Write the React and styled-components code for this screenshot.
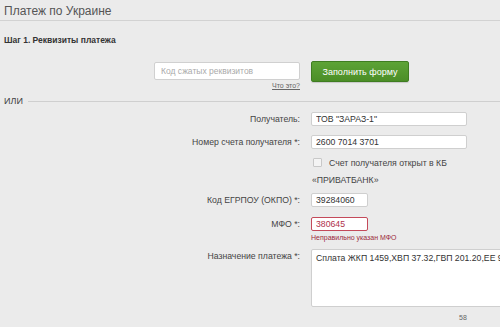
import React from "react";
import styled, { createGlobalStyle } from "styled-components";

const GlobalStyle = createGlobalStyle`
	html, body {
		margin: 0;
		padding: 0;
		background: #ebebeb;
		overflow: hidden;
	}
	body {
		font-family: "Liberation Sans", Arial, sans-serif;
		color: #444;
	}
`;

const Page = styled.div`
	width: 500px;
	height: 327px;
	box-sizing: border-box;
	background: #ebebeb;
	overflow: hidden;
`;

const Title = styled.h1`
	margin: 0;
	padding: 4px 0 0 4px;
	height: 16px;
	font-size: 12px;
	font-weight: normal;
	color: #555;
	line-height: 14px;
	border-bottom: 1px solid #d2d2d2;
`;

const StepTitle = styled.h2`
	margin: 0;
	padding: 14px 0 0 4px;
	font-size: 8.5px;
	font-weight: bold;
	color: #333;
	line-height: 10px;
`;

const QuickRow = styled.div`
	display: flex;
	align-items: flex-start;
	margin: 17px 0 0 154px;
	gap: 11px;
`;

const QuickField = styled.div`
	display: flex;
	flex-direction: column;
	align-items: flex-end;
`;

const QuickInput = styled.input`
	box-sizing: border-box;
	width: 146px;
	height: 18px;
	border: 1px solid #d0d0d0;
	border-radius: 2px;
	background: #fff;
	padding: 0 6px;
	font-family: inherit;
	font-size: 8.5px;
	color: #444;
	&::placeholder {
		color: #aaa;
	}
`;

const HelpLink = styled.a`
	margin-top: 2px;
	font-size: 7px;
	color: #666;
	text-decoration: underline;
`;

const GreenButton = styled.button`
	box-sizing: border-box;
	width: 98px;
	height: 21px;
	margin-top: -1px;
	border: 1px solid #3f7d21;
	border-radius: 2px;
	background: linear-gradient(#5da336, #4b8e27);
	color: #fff;
	font-family: inherit;
	font-size: 9px;
	padding: 0;
	box-shadow: 0 1px 1px rgba(0, 0, 0, 0.15);
`;

const Divider = styled.div`
	display: flex;
	align-items: center;
	gap: 5px;
	margin-top: 7px;
	padding-left: 4px;
	font-size: 9px;
	color: #444;
	&::after {
		content: "";
		flex: 1;
		height: 1px;
		background: #cfcfcf;
	}
`;

const Form = styled.div`
	display: grid;
	grid-template-columns: 300px 1fr;
	column-gap: 11px;
	margin-top: 3px;
`;

const Label = styled.label`
	text-align: right;
	font-size: 8.7px;
	color: #444;
	line-height: 14px;
	padding-top: ${(p) => p.$top || 0}px;
`;

const Cell = styled.div`
	display: flex;
	flex-direction: column;
	align-items: flex-start;
	padding-top: ${(p) => p.$top || 0}px;
`;

const TextInput = styled.input`
	box-sizing: border-box;
	width: ${(p) => p.$w}px;
	height: 14px;
	border: 1px solid ${(p) => (p.$error ? "#c44a5a" : "#cfcfcf")};
	border-radius: 2px;
	background: #fff;
	padding: 0 4px;
	font-family: inherit;
	font-size: 8.7px;
	color: ${(p) => (p.$error ? "#b0304a" : "#333")};
`;

const CheckLine = styled.div`
	font-size: 8.7px;
	line-height: 17px;
	color: #444;
	padding-left: 1px;
`;

const Check = styled.span`
	display: inline-block;
	width: 7px;
	height: 7px;
	border: 1px solid #c8c8c8;
	background: #f4f4f4;
	border-radius: 1px;
	margin: 0 7px 0 1px;
	vertical-align: -1px;
`;

const ErrorText = styled.div`
	font-size: 7px;
	color: #9b2c3c;
	margin-top: 3px;
`;

const TextArea = styled.textarea`
	box-sizing: border-box;
	width: 200px;
	height: 58px;
	border: 1px solid #cfcfcf;
	border-radius: 2px;
	background: #fff;
	padding: 3px 4px;
	font-family: inherit;
	font-size: 8.7px;
	color: #333;
	resize: none;
	white-space: nowrap;
	overflow: hidden;
`;

const Counter = styled.div`
	font-size: 7px;
	color: #666;
	margin: 7px 0 0 148px;
`;

export default function App() {
	return (
		<Page>
			<GlobalStyle />
			<Title>Платеж по Украине</Title>
			<StepTitle>Шаг 1. Реквизиты платежа</StepTitle>
			<QuickRow>
				<QuickField>
					<QuickInput placeholder="Код сжатых реквизитов" />
					<HelpLink>Что это?</HelpLink>
				</QuickField>
				<GreenButton>Заполнить форму</GreenButton>
			</QuickRow>
			<Divider>ИЛИ</Divider>
			<Form>
				<Label $top={3}>Получатель:</Label>
				<Cell $top={3}>
					<TextInput $w={156} defaultValue={'ТОВ "ЗАРАЗ-1"'} />
				</Cell>
				<Label $top={9}>Номер счета получателя *:</Label>
				<Cell $top={9}>
					<TextInput $w={156} defaultValue="2600 7014 3701" />
				</Cell>
				<div />
				<Cell $top={6}>
					<CheckLine>
						<Check />
						Счет получателя открыт в КБ
					</CheckLine>
					<CheckLine>«ПРИВАТБАНК»</CheckLine>
				</Cell>
				<Label $top={4}>Код ЕГРПОУ (ОКПО) *:</Label>
				<Cell $top={4}>
					<TextInput $w={57} defaultValue="39284060" />
				</Cell>
				<Label $top={10}>МФО *:</Label>
				<Cell $top={10}>
					<TextInput $w={57} $error defaultValue="380645" />
					<ErrorText>Неправильно указан МФО</ErrorText>
				</Cell>
				<Label $top={8}>Назначение платежа *:</Label>
				<Cell $top={8}>
					<TextArea defaultValue="Сплата ЖКП 1459,ХВП 37.32,ГВП 201.20,ЕЕ 96.00" />
					<Counter>58</Counter>
				</Cell>
			</Form>
		</Page>
	);
}
